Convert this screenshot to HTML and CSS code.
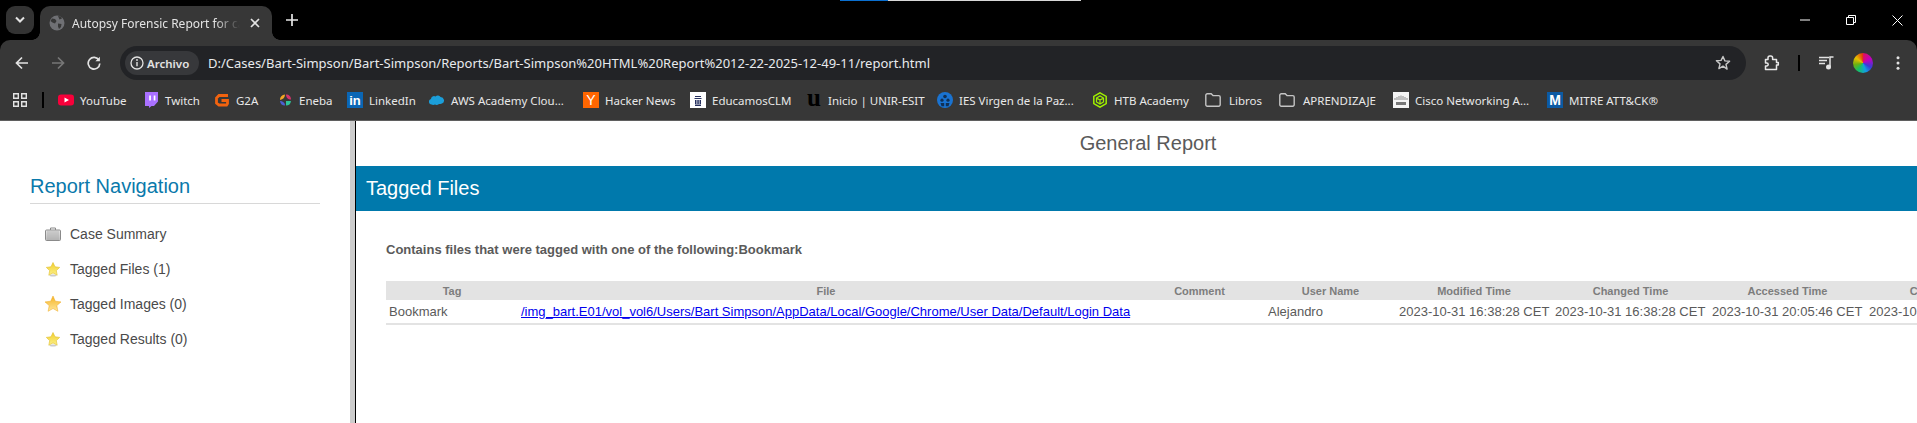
FILE: index.html
```html
<!DOCTYPE html>
<html lang="es">
<head>
<meta charset="utf-8">
<title>Autopsy Forensic Report</title>
<link rel="stylesheet" href="styles.css">
</head>
<body>
<div class="loadbar"><div class="loadbar-fill"></div></div>
<header class="tabstrip">
  <div class="tabsearch"><svg width="12" height="8" viewBox="0 0 12 8"><path d="M2 1.500l4 4 4-4" fill="none" stroke="#e3e3e3" stroke-width="2"/></svg></div>
  <div class="tab">
    <svg class="tab-fav" width="16" height="16" viewBox="0 0 16 16"><circle cx="8" cy="8" r="7.500" fill="#6f7074"/><path d="M3 3.500l3 .5 1.500 2-1.500 2.500-2.500-1-2-1.500zM9 8.500l3.500 .5-.5 3-2 2-1-2.500zM9 1l3 .5 1 2-2.500 1z" fill="#373737"/></svg>
    <span class="tab-title">Autopsy Forensic Report for case</span>
    <svg class="tab-close" width="10" height="10" viewBox="0 0 10 10"><path d="M1 1l8 8M9 1l-8 8" stroke="#e3e3e3" stroke-width="1.700"/></svg>
  </div>
  <svg class="newtab" width="12" height="12" viewBox="0 0 12 12"><path d="M6 0v12M0 6h12" stroke="#e6e6e6" stroke-width="1.700"/></svg>
  <div class="winctl">
    <div class="winbtn"><svg width="10" height="2" viewBox="0 0 10 2"><path d="M0 1h10" stroke="#fff" stroke-width="1"/></svg></div>
    <div class="winbtn"><svg width="10" height="10" viewBox="0 0 10 10"><path d="M.5 2.500h7v7h-7zM2.500 2.500v-2h7v7h-2" fill="none" stroke="#fff" stroke-width="1"/></svg></div>
    <div class="winbtn"><svg width="11" height="11" viewBox="0 0 11 11"><path d="M.5.500l10 10M10.500.500l-10 10" stroke="#fff" stroke-width="1"/></svg></div>
  </div>
</header>

<section class="chrome">
  <div class="toolbar">
    <div class="navbtn"><svg width="14" height="14" viewBox="0 0 14 14"><path d="M13 7H2M7 1.500L1.500 7 7 12.500" fill="none" stroke="#e3e3e3" stroke-width="1.700"/></svg></div>
    <div class="navbtn"><svg width="14" height="14" viewBox="0 0 14 14"><path d="M1 7h11M7 1.500L12.500 7 7 12.500" fill="none" stroke="#777" stroke-width="1.700"/></svg></div>
    <div class="navbtn"><svg width="14" height="14" viewBox="0 0 14 14"><path d="M12 4.300A5.800 5.800 0 1 0 12.800 7.500" fill="none" stroke="#e3e3e3" stroke-width="1.700"/><path d="M12.900 .8v4.500H8.400z" fill="#e3e3e3"/></svg></div>
    <div class="omnibox">
      <div class="chip">
        <svg width="14" height="14" viewBox="0 0 14 14"><circle cx="7" cy="7" r="6" fill="none" stroke="#e3e3e3" stroke-width="1.300"/><path d="M7 6v4.200" stroke="#e3e3e3" stroke-width="1.400"/><circle cx="7" cy="4" r=".9" fill="#e3e3e3"/></svg>
        <span>Archivo</span>
      </div>
      <span class="url">D:/Cases/Bart-Simpson/Bart-Simpson/Reports/Bart-Simpson%20HTML%20Report%2012-22-2025-12-49-11/report.html</span>
      <svg class="bookmark-star" width="16" height="16" viewBox="0 0 16 16"><path d="M8 1.500l1.900 4.400 4.700.4-3.600 3.100 1.100 4.700L8 11.100l-4.100 2.500 1.100-4.700-3.600-3.100 4.700-.4z" fill="none" stroke="#c7c7c7" stroke-width="1.400" stroke-linejoin="round"/></svg>
    </div>
    <div class="navbtn extbtn"><svg width="16" height="16" viewBox="0 0 16 16"><path d="M1.500 4.500h2.500V2.800A1.800 1.800 0 0 1 5.800 1h1A1.800 1.800 0 0 1 8.600 2.800v1.700h3.900v3h1.800v2.500h-1.800v4.500h-11V11h1.200a1.500 1.500 0 0 0 0-3H1.500z" fill="none" stroke="#e8e8e8" stroke-width="1.500" stroke-linejoin="round"/></svg></div>
    <div class="toolsep"></div>
    <div class="navbtn"><svg width="16" height="14" viewBox="0 0 16 14"><path d="M0 1.500h10M0 4.500h8M0 7.500h6" stroke="#e3e3e3" stroke-width="1.400"/><path d="M11 10.500V1h3.500" fill="none" stroke="#e3e3e3" stroke-width="1.500"/><circle cx="9.500" cy="11" r="2.500" fill="#e3e3e3"/></svg></div>
    <div class="navbtn avatarbtn"><div class="avatar"></div></div>
    <div class="navbtn"><svg width="4" height="14" viewBox="0 0 4 14"><circle cx="2" cy="1.800" r="1.500" fill="#e3e3e3"/><circle cx="2" cy="7" r="1.500" fill="#e3e3e3"/><circle cx="2" cy="12.200" r="1.500" fill="#e3e3e3"/></svg></div>
  </div>
  <nav class="bookmarks">
    <svg class="bm-apps" width="14" height="14" viewBox="0 0 14 14"><path d="M.7.700h4.600v4.600H.7zM8.700.700h4.600v4.600H8.700zM.7 8.700h4.600v4.600H.7zM8.700 8.700h4.600v4.600H8.700z" fill="none" stroke="#e3e3e3" stroke-width="1.400"/></svg>
    <div class="bm-sep"></div>
    <a class="bm"><svg width="16" height="16" viewBox="0 0 16 16"><rect y="2.500" width="16" height="11" rx="3" fill="#f8003a"/><path d="M6.500 5.500L11 8l-4.500 2.500z" fill="#fff"/></svg><span>YouTube</span></a>
    <a class="bm"><svg width="16" height="16" viewBox="0 0 16 16"><path d="M2 0h13v9.500L11 14H8.500l-2.500 2v-2H2z" fill="#a970ff"/><path d="M6.200 3.500h1.700v5H6.200zM10.700 3.500h1.700v5h-1.700z" fill="#fff"/></svg><span>Twitch</span></a>
    <a class="bm"><svg width="16" height="16" viewBox="0 0 16 16"><path d="M14 3.500H5L2.500 6v5L5 13h7.500l1-1.500V8.500H7.500" fill="none" stroke="#f2630f" stroke-width="2.800"/></svg><span>G2A</span></a>
    <a class="bm"><svg width="16" height="16" viewBox="0 0 16 16"><path d="M3 8a5 5 0 0 1 5-5.500c0 3-2 5-5 5.500z" fill="#f5a623"/><path d="M9 2.500c3 0 5 2 5 5-3 0-5-2-5-5z" fill="#d6336c"/><path d="M9 9c2 0 4 0 5 0-.5 3-2 4.500-5 4.500z" fill="#2fc49a"/><path d="M3 9c2.500 0 5 1.500 5 4.500C5 13.500 3.500 12 3 9z" fill="#4c5fd5"/></svg><span>Eneba</span></a>
    <a class="bm"><i class="logo logo-in">in</i><span>LinkedIn</span></a>
    <a class="bm"><svg width="16" height="16" viewBox="0 0 16 16"><path d="M2.500 12.500A2.800 2.800 0 0 1 2 7a3 3 0 0 1 4.500-2.500 3 3 0 0 1 5 .5A3.400 3.400 0 0 1 13 11.500c-1 .5-2 .5-3 .5-1 1-3 1.300-4 .5-1 .5-2.500.5-3.500 0z" fill="#1b9ed9"/></svg><span>AWS Academy Clou...</span></a>
    <a class="bm"><i class="logo logo-y">Y</i><span>Hacker News</span></a>
    <a class="bm"><svg width="16" height="16" viewBox="0 0 16 16"><rect width="16" height="16" fill="#fff"/><path d="M5 4h6v1H5zM4.500 6h7v1h-7zM5 8h1.500v4H5zM7.300 8h1.500v4H7.300zM9.500 8H11v4H9.500zM5 12.500h6V14H5z" fill="#26305f"/></svg><span>EducamosCLM</span></a>
    <a class="bm"><i class="logo logo-u">u</i><span>Inicio | UNIR-ESIT</span></a>
    <a class="bm"><svg width="16" height="16" viewBox="0 0 16 16"><circle cx="8" cy="8" r="8" fill="#1a73d1"/><circle cx="8" cy="4.500" r="1.800" fill="#103056"/><circle cx="5" cy="8.200" r="1.600" fill="#103056"/><circle cx="11" cy="8.200" r="1.600" fill="#103056"/><path d="M3.500 11h3.700v3.200H4.500zM8.800 11h3.700l-1 3.200H8.800z" fill="#103056"/></svg><span>IES Virgen de la Paz...</span></a>
    <a class="bm"><svg width="16" height="16" viewBox="0 0 16 16"><path d="M8 .8l6.200 3.600v7.200L8 15.200 1.800 11.600V4.400z" fill="none" stroke="#9fef00" stroke-width="1.500"/><path d="M4.500 6L8 4l3.500 2v4L8 12l-3.500-2zM4.500 6L8 8l3.500-2M8 8v4" fill="none" stroke="#9fef00" stroke-width="1.200"/></svg><span>HTB Academy</span></a>
    <a class="bm bm-folder"><svg width="16" height="14" viewBox="0 0 16 14"><path d="M.8 2.300A1.500 1.500 0 0 1 2.300.8h3.900L8 2.600h5.700a1.500 1.500 0 0 1 1.500 1.500v7.600a1.500 1.500 0 0 1-1.500 1.500H2.300a1.500 1.500 0 0 1-1.500-1.500z" fill="none" stroke="#c4c4c4" stroke-width="1.400"/></svg><span>Libros</span></a>
    <a class="bm bm-folder"><svg width="16" height="14" viewBox="0 0 16 14"><path d="M.8 2.300A1.500 1.500 0 0 1 2.300.8h3.900L8 2.600h5.700a1.500 1.500 0 0 1 1.500 1.500v7.600a1.500 1.500 0 0 1-1.500 1.500H2.300a1.500 1.500 0 0 1-1.500-1.500z" fill="none" stroke="#c4c4c4" stroke-width="1.400"/></svg><span>APRENDIZAJE</span></a>
    <a class="bm"><svg width="16" height="16" viewBox="0 0 16 16"><rect width="16" height="16" fill="#f4f4f4"/><path d="M2 6v2M4 5v3M6 4v4M8 3.500V8M10 4v4M12 5v3M14 6v2" stroke="#8b8b8b" stroke-width="1"/><rect x="3" y="10" width="10" height="3" fill="#777"/></svg><span>Cisco Networking A...</span></a>
    <a class="bm"><i class="logo logo-m">M</i><span>MITRE ATT&amp;CK®</span></a>
  </nav>
</section>

<main class="page">
  <aside class="sidebar">
    <h2 class="nav-title">Report Navigation</h2>
    <ul class="nav-list">
      <li class="nav-item">
        <svg class="nav-ico" width="16" height="14" viewBox="0 0 16 14"><defs><linearGradient id="case" x1="0" y1="0" x2="0" y2="1"><stop offset="0" stop-color="#e6e6e6"/><stop offset="1" stop-color="#bcbcbc"/></linearGradient></defs><path d="M5.500 3V1h5v2" fill="none" stroke="#888" stroke-width="1"/><rect x=".5" y="3" width="15" height="10.500" rx="1" fill="url(#case)" stroke="#8a8a8a"/><path d="M3 4v9M5 4v9M7 4v9M9 4v9M11 4v9M13 4v9" stroke="#a2a2a2" stroke-width=".7"/></svg>
        <span>Case Summary</span>
      </li>
      <li class="nav-item">
        <svg class="nav-ico" width="16" height="16" viewBox="0 0 16 16"><defs><linearGradient id="star" x1="0" y1="0" x2="0" y2="1"><stop offset="0" stop-color="#f2cf2a"/><stop offset="1" stop-color="#fbf08a"/></linearGradient><linearGradient id="gold" x1="0" y1="0" x2="0" y2="1"><stop offset="0" stop-color="#f5b324"/><stop offset="1" stop-color="#ffe79a"/></linearGradient></defs><ellipse cx="8" cy="14.500" rx="3.500" ry="1" fill="#ccc"/><path d="M8 1.500l2 4.300 4.700.6-3.400 3.200.9 4.600L8 11.900l-4.200 2.300.9-4.600L1.300 6.400 6 5.800z" fill="url(#star)" stroke="#e0bd2c" stroke-width=".6"/></svg>
        <span>Tagged Files (1)</span>
      </li>
      <li class="nav-item">
        <svg class="nav-ico" width="16" height="16" viewBox="0 0 16 16"><path d="M8 0l2.300 5.200L16 5.900l-4.200 3.700 1.100 5.700L8 12.500l-4.900 2.800 1.100-5.700L0 5.900l5.700-.7z" fill="url(#gold)" stroke="#eea91e" stroke-width=".5"/></svg>
        <span>Tagged Images (0)</span>
      </li>
      <li class="nav-item">
        <svg class="nav-ico" width="16" height="16" viewBox="0 0 16 16"><ellipse cx="8" cy="14.500" rx="3.500" ry="1" fill="#ccc"/><path d="M8 1.500l2 4.300 4.700.6-3.400 3.200.9 4.600L8 11.900l-4.200 2.300.9-4.600L1.300 6.400 6 5.800z" fill="url(#star)" stroke="#e0bd2c" stroke-width=".6"/></svg>
        <span>Tagged Results (0)</span>
      </li>
    </ul>
  </aside>
  <div class="splitter"></div>
  <section class="report">
    <div class="report-title">General Report</div>
    <h1 class="banner">Tagged Files</h1>
    <div class="report-body">
      <p class="intro">Contains files that were tagged with one of the following:Bookmark</p>
      <table class="tags">
        <thead>
          <tr>
            <th class="c-tag">Tag</th>
            <th class="c-file">File</th>
            <th class="c-comment">Comment</th>
            <th class="c-user">User Name</th>
            <th class="c-mod">Modified Time</th>
            <th class="c-chg">Changed Time</th>
            <th class="c-acc">Accessed Time</th>
            <th class="c-cre">Created Time</th>
          </tr>
        </thead>
        <tbody>
          <tr>
            <td>Bookmark</td>
            <td><a class="file-link" href="#">/img_bart.E01/vol_vol6/Users/Bart Simpson/AppData/Local/Google/Chrome/User Data/Default/Login Data</a></td>
            <td></td>
            <td>Alejandro</td>
            <td>2023-10-31 16:38:28 CET</td>
            <td>2023-10-31 16:38:28 CET</td>
            <td>2023-10-31 20:05:46 CET</td>
            <td>2023-10-31 16:38:28 CET</td>
          </tr>
        </tbody>
      </table>
    </div>
  </section>
</main>
</body>
</html>
```
FILE: styles.css
```css
* { box-sizing: border-box; }
html, body { margin: 0; padding: 0; height: 423px; overflow: hidden; background: #000; }
body { font-family: "Liberation Sans", Arial, sans-serif; position: relative; }

.loadbar { position: absolute; left: 840px; top: 0; width: 241px; height: 1px; background: #d8d8d8; z-index: 5; }
.loadbar-fill { width: 48px; height: 1px; background: #0a6fd0; }

.tabstrip { height: 40px; display: flex; align-items: flex-start; padding: 6px 0 0 6px; background: #000; }
.tabsearch { width: 28px; height: 28px; border-radius: 9px; background: #333; display: flex; align-items: center; justify-content: center; }
.tab { position: relative; width: 232px; height: 34px; margin-left: 6px; background: #373737; border-radius: 10px 10px 0 0; display: flex; align-items: center; padding-left: 9px; }
.tab::before, .tab::after { content: ""; position: absolute; bottom: 0; width: 8px; height: 8px; }
.tab::before { left: -8px; background: radial-gradient(circle at 0 0, transparent 7.5px, #373737 8px); }
.tab::after { right: -8px; background: radial-gradient(circle at 100% 0, transparent 7.5px, #373737 8px); }
.tab-fav { flex: none; }
.tab-title { width: 168px; margin-left: 7px; font: 12px "Noto Sans", sans-serif; color: #e3e3e3; white-space: nowrap; overflow: hidden; -webkit-mask-image: linear-gradient(90deg, #000 85%, transparent); mask-image: linear-gradient(90deg, #000 85%, transparent); }
.tab-close { margin-left: 10px; flex: none; }
.newtab { margin: 8px 0 0 14px; flex: none; }
.winctl { margin-left: auto; margin-right: -3px; margin-top: -6px; display: flex; }
.winbtn { width: 46px; height: 40px; display: flex; align-items: center; justify-content: center; }

.chrome { background: #373737; border-radius: 10px 10px 0 0; height: 80px; }
.toolbar { height: 46px; padding: 6px 1px 6px 4px; display: flex; align-items: center; }
.navbtn { width: 36px; height: 34px; flex: none; display: flex; align-items: center; justify-content: center; }
.omnibox { flex: 1; margin-left: 8px; height: 34px; border-radius: 17px; background: #222326; display: flex; align-items: center; padding: 0 15px 0 5px; }
.chip { width: 74px; height: 24px; border-radius: 12px; background: #37383b; display: flex; align-items: center; padding-left: 5px; gap: 3px; font: 600 11.5px "Noto Sans", sans-serif; color: #e3e3e3; flex: none; }
.url { margin-left: 9px; font: 13px "Noto Sans", sans-serif; color: #e8eaed; white-space: nowrap; }
.bookmark-star { margin-left: auto; flex: none; }
.extbtn { margin-left: 8px; }
.toolsep { width: 2px; height: 16px; background: #000; margin: 0 9px 0 8px; flex: none; }
.avatarbtn { width: 35px; }
.avatar { width: 20px; height: 20px; border-radius: 50%; background: conic-gradient(#e0105a, #c000c0 17%, #3a3ad8 33%, #10a0e0 45%, #18c060 60%, #70b010 72%, #e8c000 85%, #e03010); }

.bookmarks { height: 34px; padding: 0 0 6px 13px; display: grid; align-items: center; grid-template-columns: 29px 16px 85px 71px 63px 70px 82px 154px 107px 116px 131px 155px 113px 74px 114px 154px auto; }
.bm-sep { width: 2px; height: 16px; background: #000; justify-self: start; }
.bm { display: flex; align-items: center; gap: 6px; font: 11.5px "Noto Sans", sans-serif; color: #e8e8e8; white-space: nowrap; }
.bm svg { flex: none; }
.bm-folder { gap: 8px; }
.logo { width: 16px; height: 16px; flex: none; display: flex; align-items: center; justify-content: center; font-style: normal; }
.logo-in { background: #0a66b5; color: #fff; font: 700 13px "Liberation Sans", sans-serif; }
.logo-y { background: #ff6600; color: #fff; font: 400 14px "Liberation Sans", sans-serif; }
.logo-u { color: #000; font: 700 25px/16px "Liberation Serif", serif; padding-bottom: 5px; }
.logo-m { background: #0b5aa3; color: #fff; font: 700 14px "Liberation Sans", sans-serif; }

.page { height: 303px; display: flex; background: #fff; border-top: 1px solid #5f5f5f; overflow: hidden; }
.sidebar { width: 350px; flex: none; padding: 0 30px; }
.nav-title { margin: 53px 0 0; padding-bottom: 4px; border-bottom: 1px solid #d8d8d8; font-size: 20px; line-height: 25px; font-weight: 400; color: #0a79ab; }
.nav-list { list-style: none; margin: 12px 0 0; padding: 0; }
.nav-item { height: 35px; display: flex; align-items: center; font-size: 14px; color: #4a4a4a; }
.nav-item span { margin-left: 9px; }
.nav-ico { margin-left: 15px; flex: none; }
.splitter { width: 6px; flex: none; background: #ccc; border-right: 1px solid #000; }
.report { width: 1584px; flex: none; }
.report-title { height: 45px; padding-top: 10px; text-align: center; font-size: 20px; line-height: 24px; color: #5a5a5a; }
.banner { margin: 0; height: 45px; padding-left: 10px; background: #0079ac; color: #fff; font-size: 20px; font-weight: 400; line-height: 45px; }
.report-body { padding-left: 30px; }
.intro { margin: 31px 0 0; font-size: 13px; font-weight: 700; line-height: 16px; color: #5a5a5a; }
.tags { margin-top: 23px; width: 1554px; table-layout: fixed; border-collapse: collapse; border-bottom: 2px solid #e3e3e3; font-size: 13px; color: #5a5a5a; }
.tags th { height: 19px; padding: 0; background: #e3e3e3; font-size: 11px; font-weight: 700; color: #7d7d7d; text-align: center; white-space: nowrap; }
.tags td { height: 24px; padding: 0 3px; white-space: nowrap; }
.c-tag { width: 132px; }
.c-file { width: 616px; }
.c-comment { width: 131px; }
.c-user { width: 131px; }
.c-mod { width: 156px; }
.c-chg { width: 157px; }
.c-acc { width: 157px; }
.c-cre { width: 157px; }
.file-link { color: #0000ee; }
```
